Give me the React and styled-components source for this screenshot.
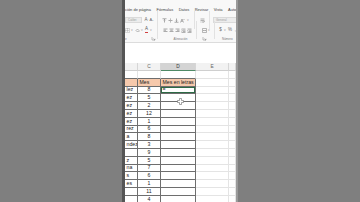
import React from 'react';
import styled, { createGlobalStyle } from 'styled-components';

const Global = createGlobalStyle`
  html, body { margin: 0; padding: 0; background: #7f7f7f; }
  body { font-family: "Liberation Sans", Arial, sans-serif; }
  * { box-sizing: border-box; }
`;

const Page = styled.div`
  display: flex;
  width: 360px;
  height: 202px;
  overflow: hidden;
  background: #7f7f7f;
`;

const Side = styled.div`
  flex: ${p => (p.$w ? 'none' : '1')};
  width: ${p => (p.$w ? `${p.$w}px` : 'auto')};
  background: #7f7f7f;
`;

const Edge = styled.div`
  flex: none;
  width: ${p => p.$w}px;
  background: ${p => p.$c};
`;

const Screen = styled.div`
  position: relative;
  flex: none;
  width: 111px;
  height: 202px;
  background: #ffffff;
  display: flex;
  flex-direction: column;
  overflow: hidden;
`;

const Ribbon = styled.div`
  flex: none;
  height: 43px;
  background: #f8f8f8;
  border-bottom: 1px solid #dcdcdc;
  display: flex;
  flex-direction: column;
`;

const Tabs = styled.div`
  height: 15px;
  display: flex;
  align-items: center;
  gap: 5.5px;
  padding-top: 3px;
  font-size: 4px;
  color: #3c3c3c;
  white-space: nowrap;
  overflow: hidden;
`;

const ToolRow = styled.div`
  height: 10px;
  display: flex;
  align-items: center;
  white-space: nowrap;
`;

const Slot = styled.div`
  flex: none;
  width: ${p => p.$w}px;
  height: 8px;
  display: flex;
  align-items: center;
  justify-content: center;
  font-size: ${p => p.$fs || 5}px;
  color: ${p => p.$c || '#6a6a6a'};
  line-height: 1;
`;

const Field = styled.div`
  flex: none;
  width: ${p => p.$w}px;
  height: 6px;
  margin-right: ${p => p.$mr || 0}px;
  background: #ececec;
  border: 0.5px solid #dadada;
  font-size: 3px;
  color: #a0a0a0;
  display: flex;
  align-items: center;
  padding-left: 2px;
  overflow: hidden;
`;

const Sep = styled.div`
  flex: none;
  width: 1px;
  height: 18px;
  margin: 0 ${p => p.$m || 2}px;
  background: #e2e2e2;
`;

const Labels = styled.div`
  height: 7px;
  display: flex;
  align-items: center;
  font-size: 3px;
  color: #7a7a7a;
  white-space: nowrap;
`;

const Label = styled.div`
  flex: none;
  width: ${p => p.$w}px;
  text-align: ${p => p.$a || 'left'};
`;

const Gap = styled.div`
  flex: none;
  height: 20px;
  background: #ffffff;
`;

const Grid = styled.div`
  display: grid;
  grid-template-columns: 13px 23px 35px 33px 7px;
  grid-template-rows: 8px;
  grid-auto-rows: 7.8px;
  font-size: 5.2px;
  color: #222;
`;

const ColHead = styled.div`
  background: ${p => (p.$sel ? '#d4d4d4' : '#f2f2f2')};
  border-right: 1px solid #d6d6d6;
  border-bottom: 1px solid ${p => (p.$sel ? '#4f8a66' : '#cfcfcf')};
  color: ${p => (p.$sel ? '#3a3a3a' : '#666')};
  font-size: 4.8px;
  display: flex;
  align-items: center;
  justify-content: center;
`;

const Cell = styled.div`
  display: flex;
  align-items: center;
  justify-content: ${p => (p.$center ? 'center' : 'flex-start')};
  padding-left: ${p => (p.$center ? 0 : 1.5)}px;
  white-space: nowrap;
  overflow: hidden;
  background: ${p => (p.$head ? '#f6c9ac' : '#fff')};
  border-right: 1px solid ${p => (p.$table ? '#6e6e6e' : '#e4e4e4')};
  border-bottom: 1px solid ${p => (p.$table || p.$topLine ? '#6e6e6e' : '#e4e4e4')};
  box-shadow: ${p => (p.$active ? 'inset 0 0 0 1px #2d6a45' : 'none')};
  line-height: 1;
`;

const Cursor = styled.svg`
  position: absolute;
  left: 52px;
  top: 98px;
  width: 7px;
  height: 7px;
`;

const data = [
  ['lez', 8], ['ez', 5], ['ez', 2], ['ez', 12], ['ez', 1], ['rez', 6],
  ['a', 8], ['ndez', 3], ['', 9], ['z', 5], ['na', 7], ['s', 6],
  ['es', 1], ['', 11], ['', 4],
];

const AlignIcon = ({ v }) => (
  <svg width="5" height="5" viewBox="0 0 10 10">
    {v === 'l' && <path d="M1 2h8M1 4.5h5M1 7h8" stroke="#777" strokeWidth="1.2" />}
    {v === 'c' && <path d="M1 2h8M2.5 4.5h5M1 7h8" stroke="#777" strokeWidth="1.2" />}
    {v === 'r' && <path d="M1 2h8M4 4.5h5M1 7h8" stroke="#777" strokeWidth="1.2" />}
    {v === 't' && <path d="M1 1.5h8M5 3v6M3.5 4.5L5 3l1.5 1.5" stroke="#777" strokeWidth="1.2" fill="none" />}
    {v === 'm' && <path d="M1 5h8M5 1v2.5M5 6.5V9" stroke="#777" strokeWidth="1.2" fill="none" />}
    {v === 'b' && <path d="M1 8.5h8M5 1v6M3.5 5.5L5 7l1.5-1.5" stroke="#777" strokeWidth="1.2" fill="none" />}
    {v === 'o' && <path d="M1 9l3-7 3 7M2.2 6.5h3.6M7 2l2 2" stroke="#777" strokeWidth="1.1" fill="none" />}
    {v === 'di' && <path d="M1 2h8M4 4.5h5M4 7h5M1 9h8M1 4l2 1.5L1 7" stroke="#777" strokeWidth="1.1" fill="none" />}
    {v === 'ii' && <path d="M1 2h8M4 4.5h5M4 7h5M1 9h8M3 4L1 5.5 3 7" stroke="#777" strokeWidth="1.1" fill="none" />}
    {v === 'wrap' && <path d="M1 2h8M1 5h6.5a1.5 1.5 0 0 1 0 3H5M1 8h2M6 6.8L5 8l1 1.2" stroke="#777" strokeWidth="1.1" fill="none" />}
    {v === 'merge' && <path d="M1 1h8v8H1zM3 5h4M3 5l1-1M3 5l1 1M7 5L6 4M7 5L6 6" stroke="#777" strokeWidth="1" fill="none" />}
    {v === 'border' && <path d="M1 1h8v8H1zM5 1v8M1 5h8" stroke="#777" strokeWidth="1" fill="none" strokeDasharray="1 1" />}
    {v === 'fill' && <path d="M2 5l3-3 3 3-3 3zM8 6.5v1.5" stroke="#777" strokeWidth="1" fill="none" />}
    {v === 'launch' && <path d="M2 2v6h6M5 5l3 3M8 5.5V8H5.5" stroke="#888" strokeWidth="1" fill="none" />}
  </svg>
);

const Caret = () => <Slot $w={4} $fs={3} $c="#888">˅</Slot>;

export default function App() {
  return (
    <>
      <Global />
      <Page>
        <Side $w={122} />
        <Edge $w={3} $c="#555555" />
        <Screen>
          <Ribbon>
            <Tabs>
              <span>ción de página</span>
              <span>Fórmulas</span>
              <span>Datos</span>
              <span>Revisar</span>
              <span>Vista</span>
              <span>Automat</span>
            </Tabs>
            <ToolRow>
              <Field $w={17} $mr={2}>Calibri</Field>
              <Slot $w={5} $fs={4.5}>A<sup style={{ fontSize: '2px' }}>^</sup></Slot>
              <Slot $w={5} $fs={4}>A<sup style={{ fontSize: '2px' }}>˅</sup></Slot>
              <Sep $m={3} />
              <Slot $w={6}><AlignIcon v="t" /></Slot>
              <Slot $w={6}><AlignIcon v="m" /></Slot>
              <Slot $w={6}><AlignIcon v="b" /></Slot>
              <Slot $w={7}><AlignIcon v="o" /></Slot>
              <Caret />
              <Sep $m={4} />
              <Slot $w={7}><AlignIcon v="wrap" /></Slot>
              <Sep $m={3} />
              <Field $w={24}>General</Field>
            </ToolRow>
            <ToolRow>
              <Slot $w={5}><AlignIcon v="border" /></Slot>
              <Caret />
              <Slot $w={6}><AlignIcon v="fill" /></Slot>
              <Caret />
              <Slot $w={5} $fs={4.5} $c="#555"><span style={{ borderBottom: '1px solid #d04040' }}>A</span></Slot>
              <Caret />
              <Sep $m={4} />
              <Slot $w={6}><AlignIcon v="l" /></Slot>
              <Slot $w={6}><AlignIcon v="c" /></Slot>
              <Slot $w={6}><AlignIcon v="r" /></Slot>
              <Slot $w={6}><AlignIcon v="di" /></Slot>
              <Slot $w={6}><AlignIcon v="ii" /></Slot>
              <Sep $m={4} />
              <Slot $w={6}><AlignIcon v="merge" /></Slot>
              <Caret />
              <Sep $m={3} />
              <Slot $w={5} $fs={4.5}>$</Slot>
              <Caret />
              <Slot $w={6} $fs={4.5}>%</Slot>
              <Slot $w={5} $fs={4.5}>,</Slot>
            </ToolRow>
            <Labels>
              <Label $w={26}>e</Label>
              <Label $w={8}><AlignIcon v="launch" /></Label>
              <Label $w={43} $a="center">Alineación</Label>
              <Label $w={20}><AlignIcon v="launch" /></Label>
              <Label $w={14}>Número</Label>
            </Labels>
          </Ribbon>
          <Gap />
          <Grid>
            <ColHead />
            <ColHead>C</ColHead>
            <ColHead $sel>D</ColHead>
            <ColHead>E</ColHead>
            <ColHead />

            <Cell $topLine />
            <Cell $topLine />
            <Cell $topLine />
            <Cell />
            <Cell />

            <Cell $table $head />
            <Cell $table $head>Mes</Cell>
            <Cell $table $head>Mes en letras</Cell>
            <Cell />
            <Cell />

            {data.map(([name, n], i) => (
              <React.Fragment key={i}>
                <Cell $table>{name}</Cell>
                <Cell $table $center>{n}</Cell>
                <Cell $table $active={i === 0}>{i === 0 ? '=' : ''}</Cell>
                <Cell />
                <Cell />
              </React.Fragment>
            ))}
          </Grid>
          <Cursor viewBox="0 0 14 14">
            <path
              d="M5 1h4v4h4v4H9v4H5V9H1V5h4z"
              fill="#fff"
              stroke="#666"
              strokeWidth="1.2"
            />
          </Cursor>
        </Screen>
        <Edge $w={2} $c="#9a9a9a" />
        <Side />
      </Page>
    </>
  );
}
